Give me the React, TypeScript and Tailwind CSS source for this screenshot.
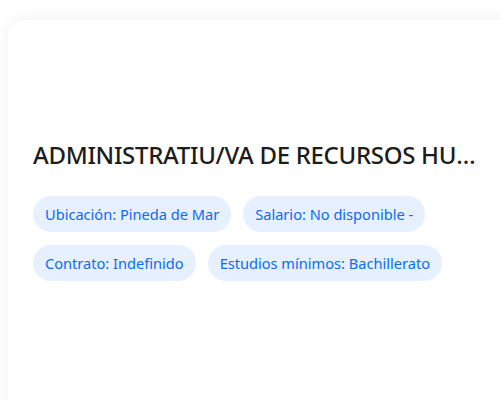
export default function App() {
  const tags = [
    "Ubicación: Pineda de Mar",
    "Salario: No disponible -",
    "Contrato: Indefinido",
    "Estudios mínimos: Bachillerato",
  ];

  return (
    <div className="h-[400px] w-[500px] overflow-hidden bg-white pl-2 pt-5 font-['Noto_Sans',sans-serif]">
      <div className="h-[420px] w-[520px] rounded-tl-2xl bg-white pl-[25px] pr-[52px] pt-[119px] shadow-[0_0_18px_rgba(0,0,0,0.06)]">
        <h2 className="truncate text-[24px] font-medium leading-8 tracking-[-0.3px] text-[#1c1c1c]">
          ADMINISTRATIU/VA DE RECURSOS HUMANS
        </h2>
        <div className="mt-[25px] flex flex-wrap gap-x-3 gap-y-[13px]">
          {tags.map((tag) => (
            <span
              key={tag}
              className="rounded-full bg-[#e6f0ff] px-3 py-2 text-[14.6px] leading-5 text-[#0b6cf5]"
            >
              {tag}
            </span>
          ))}
        </div>
      </div>
    </div>
  );
}
